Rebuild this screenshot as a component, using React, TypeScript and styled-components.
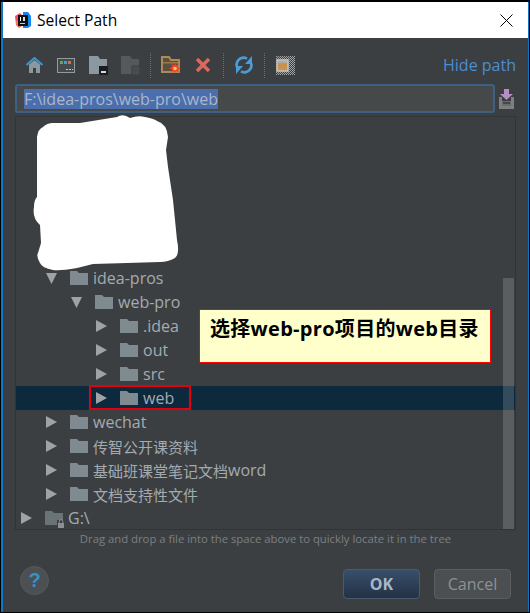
import React from 'react';
import styled, { createGlobalStyle } from 'styled-components';

const UI_FONT = '"Open Sans", "Noto Sans CJK SC", sans-serif';

const GlobalStyle = createGlobalStyle`
  html, body {
    margin: 0;
    padding: 0;
    background: #000;
  }
`;

const Frame = styled.div`
  position: relative;
  width: 530px;
  height: 613px;
  box-sizing: border-box;
  padding: 2px 1px 1px 1px;
  background: #000;
  font-family: ${UI_FONT};
  overflow: hidden;
`;

const Dialog = styled.div`
  display: flex;
  flex-direction: column;
  height: 100%;
  box-sizing: border-box;
  border-left: 2px solid #0f76c6;
  border-right: 1px solid #0f76c6;
  background: #3c3f41;
`;

const TitleBar = styled.div`
  display: flex;
  align-items: center;
  gap: 6px;
  height: 36px;
  flex-shrink: 0;
  padding: 0 15px 0 12px;
  background: #fff;
  color: #000;
  font-size: 15.6px;
`;

const TitleText = styled.span`
  flex: 1;
`;

const Toolbar = styled.div`
  display: flex;
  align-items: center;
  height: 26px;
  flex-shrink: 0;
  padding: 14px 12px 6px 15px;
`;

const ToolSlot = styled.div`
  display: flex;
  align-items: center;
  justify-content: center;
  width: 32px;
  height: 26px;
`;

const ToolSep = styled.div`
  width: 0;
  height: 25px;
  margin: 0 4px 0 4px;
  border-left: 1px dotted #6d7072;
`;

const HidePath = styled.span`
  margin-left: auto;
  color: #4c8dd2;
  font-size: 16px;
`;

const PathRow = styled.div`
  display: flex;
  align-items: center;
  gap: 4px;
  height: 29px;
  flex-shrink: 0;
  padding: 0 14px 0 12px;
`;

const PathInput = styled.div`
  flex: 1;
  display: flex;
  align-items: center;
  height: 29px;
  box-sizing: border-box;
  padding-left: 7px;
  border: 2px solid #3d6185;
  border-radius: 3px;
  background: #45494a;
`;

const PathSelection = styled.span`
  height: 20px;
  line-height: 20px;
  background: #4b6eaf;
  color: #a9b7c6;
  font-size: 16px;
`;

const TreePanel = styled.div`
  position: relative;
  height: 414px;
  flex-shrink: 0;
  box-sizing: border-box;
  margin: 3px 12px 0;
  padding-top: 149px;
  border: 1px solid #313335;
  border-top-color: #323436;
  overflow: hidden;
`;

const TreeRow = styled.div<{ $level: number; $selected?: boolean }>`
  display: flex;
  align-items: center;
  height: 24px;
  padding-left: ${props => 5 + props.$level * 25}px;
  background: ${props => (props.$selected ? '#0d293e' : 'transparent')};
  color: #a3abb1;
  font-size: 16px;
  white-space: nowrap;
`;

const CjkLabel = styled.span`
  font-size: 15px;
`;

const TreeArrow = styled.svg`
  width: 11px;
  height: 12px;
  margin-right: 13px;
  flex-shrink: 0;
`;

const TreeFolder = styled.svg`
  width: 20px;
  height: 20px;
  margin-right: 3px;
  flex-shrink: 0;
`;

const ScrollThumb = styled.div`
  position: absolute;
  top: 161px;
  right: 1px;
  bottom: 0;
  width: 11px;
  background: rgba(255, 255, 255, 0.16);
`;

const Hint = styled.div`
  height: 17px;
  line-height: 17px;
  flex-shrink: 0;
  text-align: center;
  color: #7b7f82;
  font-size: 11.3px;
`;

const Footer = styled.div`
  flex: 1;
  display: flex;
  align-items: flex-start;
  gap: 14px;
  padding: 22px 17px 0 17px;
`;

const HelpButton = styled.div`
  display: flex;
  align-items: center;
  justify-content: center;
  width: 29px;
  height: 29px;
  box-sizing: border-box;
  margin: -3px auto 0 0;
  border: 1px solid #55595b;
  border-radius: 50%;
  background: #4c5052;
  color: #3592c4;
  font-family: "Liberation Sans", sans-serif;
  font-size: 20px;
  font-weight: 700;
`;

const DialogButton = styled.div<{ $primary?: boolean }>`
  display: flex;
  align-items: center;
  justify-content: center;
  width: 77px;
  height: 30px;
  box-sizing: border-box;
  border: 1px solid ${props => (props.$primary ? '#4a5a6c' : '#5b5f61')};
  border-radius: 4px;
  background: ${props => (props.$primary ? 'linear-gradient(#384f6b, #233145)' : '#4b4f51')};
  color: ${props => (props.$primary ? '#a9b7c6' : '#8e9295')};
  font-size: 16px;
  font-weight: ${props => (props.$primary ? 700 : 400)};
`;

const Scribble = styled.svg`
  position: absolute;
  top: 110px;
  left: 30px;
  width: 152px;
  height: 164px;
`;

const Callout = styled.div`
  position: absolute;
  top: 309px;
  left: 199px;
  width: 292px;
  height: 54px;
  box-sizing: border-box;
  padding: 5px 0 0 10px;
  border: 1px solid #f00;
  background: #ffffcc;
  color: #000;
  font-family: "Open Sans", "Noto Sans CJK SC", sans-serif;
  font-size: 20px;
  line-height: 28px;
  font-weight: 700;
  letter-spacing: 0.3px;
  white-space: nowrap;
`;

const RedMark = styled.div`
  position: absolute;
  top: 385px;
  left: 89px;
  width: 102px;
  height: 25px;
  box-sizing: border-box;
  border: 2px solid #e3000f;
`;

const Arrow: React.FC<{ open?: boolean }> = ({ open }) => (
  <TreeArrow viewBox="0 0 11 12">
    {open ? <path d="M0 1h11L5.5 12z" fill="#a0a2a3" /> : <path d="M0 0l11 6L0 12z" fill="#a0a2a3" />}
  </TreeArrow>
);

const Folder: React.FC<{ locked?: boolean }> = ({ locked }) => (
  <TreeFolder viewBox="0 0 20 20">
    <path d="M0 3h7l2 2h9v12H0z" fill={locked ? '#6a7378' : '#7f8b91'} />
    {locked && (
      <>
        <rect x="12" y="12" width="8" height="8" fill="#3c3f41" />
        <rect x="13" y="15" width="6" height="5" fill="#8d9093" />
        <path d="M14.2 15v-1.500a1.800 1.800 0 0 1 3.600 0V15" fill="none" stroke="#8d9093" />
      </>
    )}
  </TreeFolder>
);

const rows: { cjk?: string; label?: string; level: number; open?: boolean; selected?: boolean; locked?: boolean }[] = [
  { label: 'idea-pros', level: 1, open: true },
  { label: 'web-pro', level: 2, open: true },
  { label: '.idea', level: 3 },
  { label: 'out', level: 3 },
  { label: 'src', level: 3 },
  { label: 'web', level: 3, selected: true },
  { label: 'wechat', level: 1 },
  { cjk: '传智公开课资料', level: 1 },
  { cjk: '基础班课堂笔记文档', label: 'word', level: 1 },
  { cjk: '文档支持性文件', level: 1 },
  { label: 'G:\\', level: 0, locked: true },
];

const App: React.FC = () => (
  <Frame>
    <GlobalStyle />
    <Dialog>
      <TitleBar>
        <svg width="16" height="17" viewBox="0 0 16 17">
          <path d="M0 4l5-3 3 3v9l-4 3-3-3z" fill="#f0506e" />
          <path d="M1 10l4-3v8l-3-1z" fill="#f58a2e" />
          <path d="M8 0h5l3 4v10l-3 2H8z" fill="#1587f2" />
          <rect x="3" y="3" width="10" height="11" fill="#111" />
          <rect x="5" y="5" width="1" height="4" fill="#fff" />
          <rect x="8" y="5" width="2" height="4" fill="#ddd" />
          <rect x="5" y="11" width="5" height="1" fill="#ccc" />
        </svg>
        <TitleText>Select Path</TitleText>
        <svg width="13" height="13" viewBox="0 0 13 13">
          <path d="M.5.5l12 12M12.5.5l-12 12" stroke="#000" strokeWidth="1" fill="none" />
        </svg>
      </TitleBar>
      <Toolbar>
        <ToolSlot>
          <svg width="17" height="16" viewBox="0 0 17 16">
            <path d="M3 7.500L8.500 3 14 7.500V16h-4v-5H7v5H3z" fill="#8b989f" />
            <path d="M.5 8L8.500 1l8 7" fill="none" stroke="#3f94c9" strokeWidth="2" />
          </svg>
        </ToolSlot>
        <ToolSlot>
          <svg width="18" height="15" viewBox="0 0 18 15">
            <rect width="18" height="15" fill="#8f9ba1" />
            <rect x="1" y="1" width="16" height="13" fill="#454a4d" />
            <rect x="3" y="3" width="3" height="3" fill="#62a85a" />
            <rect x="7" y="3" width="3" height="3" fill="#4a9bd0" />
            <rect x="11" y="3" width="3" height="3" fill="#d9703c" />
            <rect x="9" y="11" width="2" height="1" fill="#c5c8ca" />
            <rect x="12" y="11" width="2" height="1" fill="#c5c8ca" />
            <rect x="15" y="11" width="1" height="1" fill="#c5c8ca" />
          </svg>
        </ToolSlot>
        <ToolSlot>
          <svg width="19" height="19" viewBox="0 0 19 19">
            <path d="M0 0h9l2 3h7v15H0z" fill="#8b989f" />
            <rect x="10" y="10" width="9" height="9" fill="#1b1c1d" />
            <rect x="12" y="15" width="5" height="2" fill="#d5d7d8" />
          </svg>
        </ToolSlot>
        <ToolSlot>
          <svg width="19" height="19" viewBox="0 0 19 19">
            <path d="M0 0h9l2 3h7v15H0z" fill="#55595b" />
            <rect x="11" y="10" width="8" height="9" fill="#494c4e" stroke="#3c3f41" />
          </svg>
        </ToolSlot>
        <ToolSep />
        <ToolSlot>
          <svg width="20" height="19" viewBox="0 0 20 19">
            <path d="M1 1h7l2 3h8v12H1z" fill="#5a5044" stroke="#b08a55" strokeWidth="2" />
            <rect x="2" y="6" width="15" height="1.500" fill="#9a7a4a" />
            <path d="M14 7l1 2.500 2.500-1.500-.5 3 3 1.500-3 1 .5 3-2.500-1.500-1 2.500-1-2.500-2.500 1.500.5-3-3-1 3-1.500-.5-3 2.500 1.500z" fill="#f0442e" />
            <circle cx="14" cy="12.500" r="1.800" fill="#ffc46a" />
          </svg>
        </ToolSlot>
        <ToolSlot>
          <svg width="16" height="16" viewBox="0 0 16 16">
            <path d="M2 2l12 12M14 2L2 14" stroke="#d9695c" strokeWidth="3.500" fill="none" />
          </svg>
        </ToolSlot>
        <ToolSep />
        <ToolSlot>
          <svg width="20" height="18" viewBox="0 0 20 18">
            <path d="M13 2.600A7 7 0 0 0 5 14" fill="none" stroke="#4d9bd4" strokeWidth="2.800" />
            <path d="M7 15.400A7 7 0 0 0 15 4" fill="none" stroke="#4d9bd4" strokeWidth="2.800" />
            <path d="M18 0v8h-7z" fill="#4d9bd4" />
            <path d="M2 18v-8h7z" fill="#4d9bd4" />
          </svg>
        </ToolSlot>
        <ToolSep />
        <ToolSlot>
          <svg width="19" height="19" viewBox="0 0 19 19">
            <defs>
              <pattern id="checks" width="2" height="2" patternUnits="userSpaceOnUse">
                <rect width="1" height="1" fill="#a0a2a3" />
                <rect x="1" y="1" width="1" height="1" fill="#a0a2a3" />
              </pattern>
            </defs>
            <rect width="19" height="19" fill="url(#checks)" />
            <rect x="1" y="4" width="11" height="11" fill="#c8924f" stroke="#c3c6c8" strokeWidth="1.500" />
            <rect x="2" y="5" width="9" height="2" fill="#a9adb0" />
          </svg>
        </ToolSlot>
        <HidePath>Hide path</HidePath>
      </Toolbar>
      <PathRow>
        <PathInput>
          <PathSelection>F:\idea-pros\web-pro\web</PathSelection>
        </PathInput>
        <svg width="15" height="20" viewBox="0 0 15 20">
          <path d="M0 8h3v9h9V8h3v12H0z" fill="#7d7f80" />
          <rect x="3" y="12" width="9" height="5" fill="#6a6c6d" />
          <rect x="4" y="13" width="7" height="2" fill="#45494a" />
          <path d="M5 0h5v5h4l-6.500 6L1 5h4z" fill="#b48ec4" />
        </svg>
      </PathRow>
      <TreePanel>
        {rows.map(row => (
          <TreeRow key={`${row.cjk ?? ''}${row.label ?? ''}`} $level={row.level} $selected={row.selected}>
            <Arrow open={row.open} />
            <Folder locked={row.locked} />
            {row.cjk && <CjkLabel>{row.cjk}</CjkLabel>}
            {row.label}
          </TreeRow>
        ))}
        <ScrollThumb />
      </TreePanel>
      <Hint>Drag and drop a file into the space above to quickly locate it in the tree</Hint>
      <Footer>
        <HelpButton>?</HelpButton>
        <DialogButton $primary>OK</DialogButton>
        <DialogButton>Cancel</DialogButton>
      </Footer>
    </Dialog>
    <Scribble viewBox="30 110 152 164">
      <path
        d="M37 137 Q38 129 43 127 Q47 123 53 123 L80 123 L117 117 Q123 113 130 118 Q138 115 145 117 Q155 119 157 121 Q167 124 168 137 L166 150 L168 167 L173 200 L177 240 Q180 254 175 258 Q168 262 160 262 L127 263 L93 264 L77 268 Q60 271 53 270 Q42 268 40 263 Q36 256 38 253 L41 243 L40 225 Q32 218 34 207 Q34 200 37 197 Z"
        fill="#fff"
      />
    </Scribble>
    <Callout>选择web-pro项目的web目录</Callout>
    <RedMark />
  </Frame>
);

export default App;
